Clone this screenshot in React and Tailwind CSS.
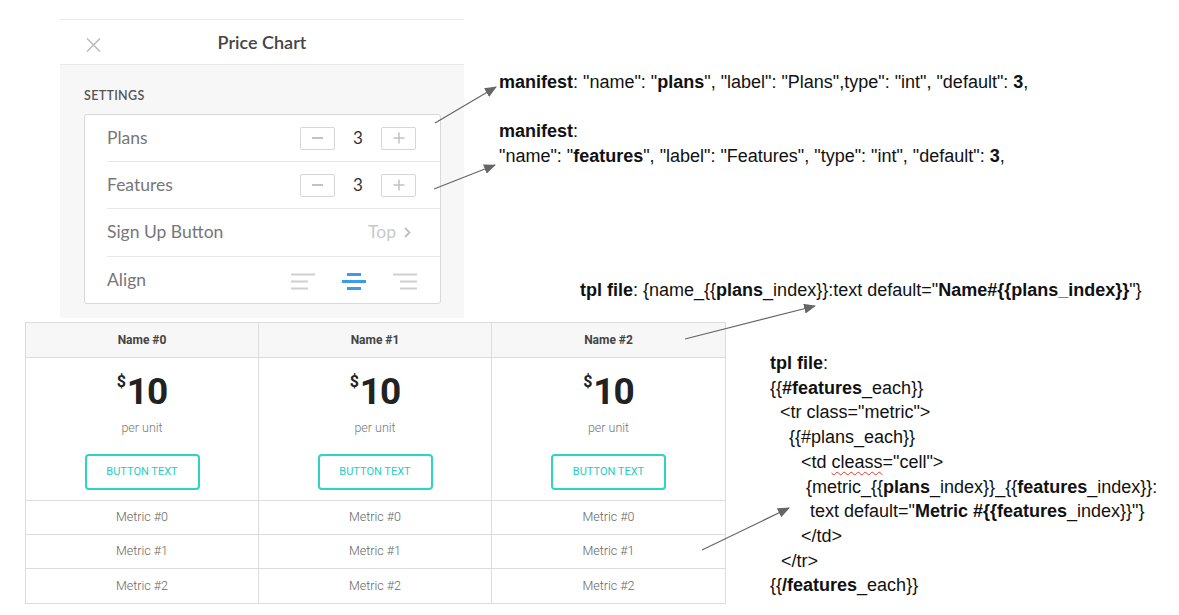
import React from "react";

const plans = [0, 1, 2];
const features = [0, 1, 2];

function Stepper({ value }) {
  return (
    <div className="flex items-center">
      <div className="w-[35px] h-[23px] border border-[#d6d6d6] rounded-[2px] flex items-center justify-center">
        <span className="block w-[11px] h-[1.5px] bg-[#c2c2c2]" />
      </div>
      <span className="w-[46px] text-center text-[17px] text-[#333]">{value}</span>
      <div className="w-[35px] h-[23px] border border-[#d6d6d6] rounded-[2px] flex items-center justify-center">
        <svg width="12" height="12" viewBox="0 0 12 12">
          <path d="M6 0.5v11M0.5 6h11" stroke="#c2c2c2" strokeWidth="1.5" />
        </svg>
      </div>
    </div>
  );
}

function AlignIcon({ kind, active }) {
  const color = active ? "#3d9be9" : "#cfcfcf";
  const w = active ? 3 : 2;
  let lines;
  if (kind === "left") lines = [[0, 24], [0, 17], [0, 17]];
  else if (kind === "center") lines = [[5, 19], [0, 24], [5, 19]];
  else lines = [[0, 24], [7, 24], [7, 24]];
  return (
    <svg width="24" height="17" viewBox="0 0 24 17">
      {lines.map(([a, b], i) => (
        <line key={i} x1={a} x2={b} y1={1.5 + i * 7} y2={1.5 + i * 7} stroke={color} strokeWidth={w} />
      ))}
    </svg>
  );
}

function SettingsPanel() {
  return (
    <div className="absolute left-[60px] top-[19px] w-[404px] h-[299px] flex flex-col font-['Lato','Open_Sans',sans-serif]">
      <div className="relative h-[46px] shrink-0 bg-white border-t border-b border-[#e8e8e8] flex items-center justify-center">
        <svg className="absolute left-[26px] top-[18px]" width="15" height="14" viewBox="0 0 15 14">
          <path d="M1 0.5l13 13M14 0.5l-13 13" stroke="#bdbdbd" strokeWidth="1.6" />
        </svg>
        <span className="text-[18px] font-semibold text-[#444]">Price Chart</span>
      </div>
      <div className="flex-1 bg-[#f7f7f7] px-[24px] pt-[23px]">
        <div className="text-[12.5px] font-semibold tracking-wide text-[#555] leading-[16px]">SETTINGS</div>
        <div className="mt-[10px] w-[357px] bg-white border border-[#d9d9d9] rounded-[3px] flex flex-col text-[17.5px] text-[#777]">
          <div className="ml-[22px] pr-[24px] h-[47px] flex items-center justify-between border-b border-[#e8e8e8]">
            <span>Plans</span>
            <Stepper value={3} />
          </div>
          <div className="ml-[22px] pr-[24px] h-[47px] flex items-center justify-between border-b border-[#e8e8e8]">
            <span>Features</span>
            <Stepper value={3} />
          </div>
          <div className="ml-[22px] pr-[29px] h-[48px] flex items-center justify-between border-b border-[#e8e8e8]">
            <span>Sign Up Button</span>
            <span className="flex items-center gap-[8px] text-[#c9c9c9]">
              Top
              <svg width="7" height="11" viewBox="0 0 7 11">
                <path d="M1 1l4.5 4.5L1 10" stroke="#bdbdbd" strokeWidth="1.8" fill="none" />
              </svg>
            </span>
          </div>
          <div className="ml-[22px] pr-[23px] h-[46px] flex items-center justify-between">
            <span>Align</span>
            <div className="flex items-center gap-[27px] pt-[2px]">
              <AlignIcon kind="left" />
              <AlignIcon kind="center" active />
              <AlignIcon kind="right" />
            </div>
          </div>
        </div>
      </div>
    </div>
  );
}

function PriceTable() {
  return (
    <div className="absolute left-[25px] top-[322px] w-[701px] border border-[#dcdcdc] font-['Roboto',sans-serif]">
      <div className="grid grid-cols-3 h-[35px] bg-[#f7f7f7] border-b border-[#dcdcdc]">
        {plans.map((p) => (
          <div key={p} className="flex items-center justify-center border-r border-[#dcdcdc] last:border-r-0 text-[12px] font-bold text-[#444]">
            Name #{p}
          </div>
        ))}
      </div>
      <div className="grid grid-cols-3 h-[143px] border-b border-[#dcdcdc]">
        {plans.map((p) => (
          <div key={p} className="flex flex-col items-center pt-[13px] border-r border-[#dcdcdc] last:border-r-0">
            <div className="h-[41px] flex items-start text-[#222] font-bold">
              <span className="text-[16px] leading-[16px] mt-[3px] mr-[1px]">$</span>
              <span className="text-[37px] leading-[41px] tracking-[-1px]">10</span>
            </div>
            <div className="mt-[8px] h-[16px] leading-[16px] text-[12.5px] font-light text-[#777]">per unit</div>
            <button className="mt-[18px] w-[115px] h-[36px] border-2 border-[#2dd3c4] rounded-[4px] text-[11px] text-[#22cfc0]">
              BUTTON TEXT
            </button>
          </div>
        ))}
      </div>
      {features.map((f) => (
        <div key={f} className="grid grid-cols-3 h-[34px] border-b border-[#dcdcdc] last:border-b-0">
          {plans.map((p) => (
            <div key={p} className="flex items-center justify-center border-r border-[#dcdcdc] last:border-r-0 text-[12.5px] font-light text-[#666]">
              Metric #{f}
            </div>
          ))}
        </div>
      ))}
    </div>
  );
}

function Arrows() {
  const lines = [
    [435, 123, 496, 87],
    [434, 189, 495, 165],
    [685, 339, 815, 306],
    [702, 550, 789, 508],
  ];
  return (
    <svg className="absolute inset-0 pointer-events-none" width="1179" height="615">
      <defs>
        <marker id="head" markerWidth="12" markerHeight="10" refX="11" refY="5" orient="auto" markerUnits="userSpaceOnUse">
          <path d="M0 0L12 5L0 10z" fill="#666" />
        </marker>
      </defs>
      {lines.map(([x1, y1, x2, y2], i) => (
        <line key={i} x1={x1} y1={y1} x2={x2} y2={y2} stroke="#666" strokeWidth="1.2" markerEnd="url(#head)" />
      ))}
    </svg>
  );
}

function Notes() {
  return (
    <div className="font-['Liberation_Sans',Arial,sans-serif] text-[18px] leading-[25px] text-[#111]">
      <div className="absolute left-[499px] top-[70px] whitespace-nowrap">
        <b>manifest</b>: "name": "<b>plans</b>", "label": "Plans",type": "int", "default": <b>3</b>,
      </div>
      <div className="absolute left-[499px] top-[119px] whitespace-nowrap">
        <div><b>manifest</b>:</div>
        <div>
          "name": "<b>features</b>", "label": "Features", "type": "int", "default": <b>3</b>,
        </div>
      </div>
      <div className="absolute left-[580px] top-[278px] whitespace-nowrap">
        <b>tpl file</b>: {"{name_{{"}<b>plans</b>{"_index}}:text default=\""}<b>{"Name#{{plans_index}}"}</b>{"\"}"}
      </div>
      <div className="absolute left-[770px] top-[351px] whitespace-nowrap leading-[24.7px]">
        <div><b>tpl file</b>:</div>
        <div>{"{{"}<b>#features</b>_each{"}}"}</div>
        <div className="pl-[10px]">{'<tr class="metric">'}</div>
        <div className="pl-[19px]">{"{{#plans_each}}"}</div>
        <div className="pl-[31px]">
          {"<td "}
          <span className="underline decoration-wavy decoration-[#e53935] decoration-1 underline-offset-[3px]">cleass</span>
          {'="cell">'}
        </div>
        <div className="pl-[36px]">
          {"{metric_{{"}<b>plans</b>{"_index}}_{{"}<b>features</b>{"_index}}:"}
        </div>
        <div className="pl-[40px]">
          {'text default="'}<b>{"Metric #{{features"}</b>{'_index}}"}'}
        </div>
        <div className="pl-[31px]">{"</td>"}</div>
        <div className="pl-[11px]">{"</tr>"}</div>
        <div>{"{{"}<b>/features</b>_each{"}}"}</div>
      </div>
    </div>
  );
}

export default function App() {
  return (
    <div className="relative w-[1179px] h-[615px] bg-white overflow-hidden">
      <SettingsPanel />
      <PriceTable />
      <Notes />
      <Arrows />
    </div>
  );
}
